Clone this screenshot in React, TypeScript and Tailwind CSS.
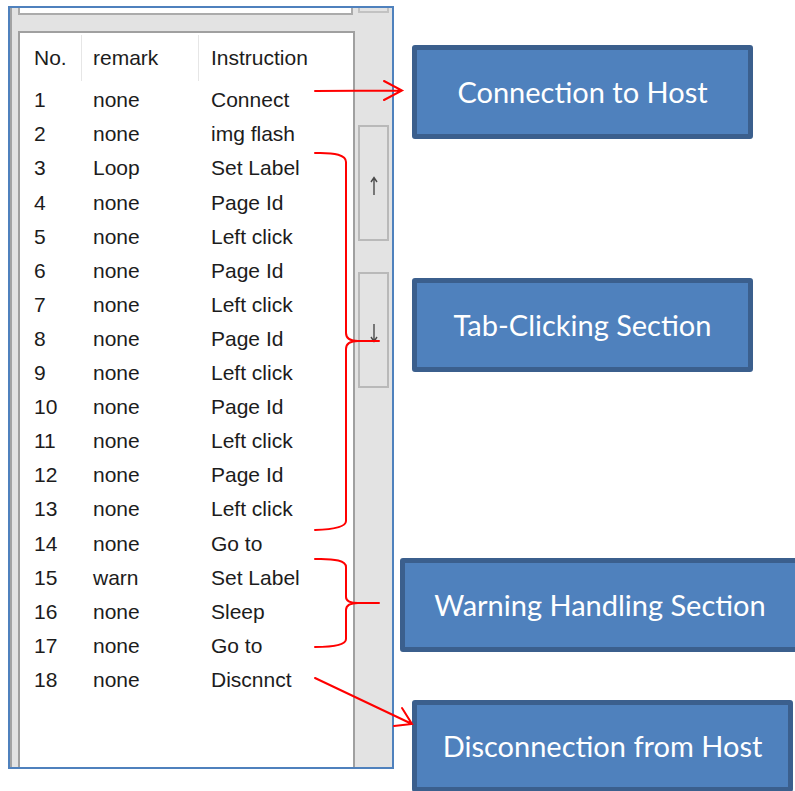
import React from "react"

type Row = {
  no: number
  remark: string
  instruction: string
}

const rows: Row[] = [
  { no: 1, remark: "none", instruction: "Connect" },
  { no: 2, remark: "none", instruction: "img flash" },
  { no: 3, remark: "Loop", instruction: "Set Label" },
  { no: 4, remark: "none", instruction: "Page Id" },
  { no: 5, remark: "none", instruction: "Left click" },
  { no: 6, remark: "none", instruction: "Page Id" },
  { no: 7, remark: "none", instruction: "Left click" },
  { no: 8, remark: "none", instruction: "Page Id" },
  { no: 9, remark: "none", instruction: "Left click" },
  { no: 10, remark: "none", instruction: "Page Id" },
  { no: 11, remark: "none", instruction: "Left click" },
  { no: 12, remark: "none", instruction: "Page Id" },
  { no: 13, remark: "none", instruction: "Left click" },
  { no: 14, remark: "none", instruction: "Go to" },
  { no: 15, remark: "warn", instruction: "Set Label" },
  { no: 16, remark: "none", instruction: "Sleep" },
  { no: 17, remark: "none", instruction: "Go to" },
  { no: 18, remark: "none", instruction: "Discnnct" },
]

function ScrollButton({ dir }: { dir: "up" | "down" }) {
  return (
    <div className="w-[31px] h-[116px] border-2 border-[#b9b9b9] bg-[#e3e3e3] flex items-center justify-center">
      <svg width="10" height="20" viewBox="0 0 10 20" className={dir === "up" ? "mt-[6px]" : "mt-[6px]"}>
        {dir === "up" ? (
          <path d="M5 2 L5 19 M2 6 L5 1.5 L8 6" stroke="#4a4a4a" strokeWidth="1.4" fill="none" />
        ) : (
          <path d="M5 1 L5 18 M2 14 L5 18.5 L8 14" stroke="#4a4a4a" strokeWidth="1.4" fill="none" />
        )}
      </svg>
    </div>
  )
}

function Callout({ label, className }: { label: string; className: string }) {
  return (
    <div
      className={`shrink-0 flex items-center justify-center bg-[#4f81bd] border-[5px] border-[#3b5f8d] rounded-[3px] text-white text-[29px] font-['Lato',sans-serif] ${className}`}
    >
      {label}
    </div>
  )
}

export default function App() {
  return (
    <div className="relative w-[795px] h-[791px] bg-white overflow-hidden flex font-['Liberation_Sans',Arial,sans-serif]">

      {/* window screenshot */}
      <div className="ml-[8px] mt-[6px] w-[386px] h-[763px] shrink-0 border-2 border-[#4f81bd] bg-[#e3e3e3] flex">
        <div className="w-[2px] bg-[#a3a3a3]" />

        <div className="flex-1 flex flex-col min-w-0">
          <div className="flex h-[7px] shrink-0">
            <div className="ml-[6px] w-[335px] h-[7px] bg-white border-x-2 border-b-2 border-[#ababab]" />
            <div className="ml-[5px] w-[31px] h-[5px] border-x-2 border-b-2 border-[#c2c2c2]" />
          </div>

          <div className="mt-[16px] flex flex-1 min-h-0">
            <div className="ml-[6px] w-[337px] bg-white border-2 border-b-0 border-[#a0a0a0] text-[21px] text-[#1c1c1c]">
              <div className="flex h-[50px]">
                <div className="w-[62px] my-[2px] pl-[14px] flex items-center border-r border-[#e6e6e6]">No.</div>
                <div className="w-[117px] my-[2px] pl-[11px] flex items-center border-r border-[#e6e6e6]">remark</div>
                <div className="flex-1 pl-[12px] flex items-center">Instruction</div>
              </div>

              {rows.map((row) => (
                <div key={row.no} className="flex h-[34.1px] items-center">
                  <div className="w-[62px] pl-[14px]">{row.no}</div>
                  <div className="w-[117px] pl-[11px]">{row.remark}</div>
                  <div className="flex-1 pl-[12px]">{row.instruction}</div>
                </div>
              ))}
            </div>

            <div className="flex-1 flex flex-col pl-[3px]">
              <div className="mt-[94px]">
                <ScrollButton dir="up" />
              </div>
              <div className="mt-[31px]">
                <ScrollButton dir="down" />
              </div>
            </div>
          </div>
        </div>
      </div>

      {/* callouts */}
      <div className="flex flex-col shrink-0">
        <Callout label="Connection to Host" className="ml-[18px] mt-[45px] w-[341px] h-[94px]" />
        <Callout label="Tab-Clicking Section" className="ml-[18px] mt-[139px] w-[341px] h-[94px]" />
        <Callout label="Warning Handling Section" className="ml-[6px] mt-[186px] w-[400px] h-[94px]" />
        <Callout label="Disconnection from Host" className="ml-[18px] mt-[48px] w-[381px] h-[92px]" />
      </div>

      {/* red annotation strokes */}
      <svg
        className="absolute inset-0 pointer-events-none"
        width="795"
        height="791"
        viewBox="0 0 795 791"
      >
        <g stroke="#ff0000" strokeWidth="2" fill="none" strokeLinecap="round">
          <path d="M315 91 L402 90.5 M384 81 L402 90.5 L384 100" />
          <path d="M315 153 Q346 152 346 162 L346 333 Q346 341 358 341 L379 341 M358 341 Q346 341 346 349 L346 521 Q346 529 315 530" />
          <path d="M315 559 Q346 558 346 567 L346 597 Q346 603 358 603 L379 603 M358 603 Q346 603 346 610 L346 639 Q346 647 315 647" />
          <path d="M315 678 L412 724 M402 708 L412 724 L394 726" />
        </g>
      </svg>
    </div>
  )
}
